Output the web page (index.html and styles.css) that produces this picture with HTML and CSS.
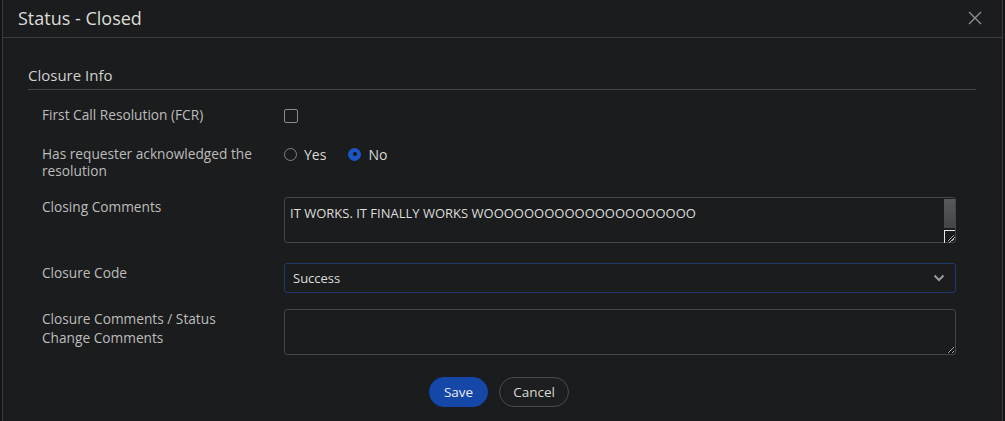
FILE: index.html
```html
<!DOCTYPE html>
<html lang="en">
<head>
<meta charset="utf-8">
<title>Status - Closed</title>
<link rel="stylesheet" href="styles.css">
</head>
<body>
<div class="dialog">
  <div class="header">
    <div class="title">Status - Closed</div>
    <svg class="close" width="14" height="14" viewBox="0 0 14 14"><path d="M1 1L13 13M13 1L1 13" stroke="#8f9092" stroke-width="1.4" fill="none"/></svg>
  </div>
  <div class="body">
    <div class="section-title">Closure Info</div>
    <div class="row r1">
      <div class="label">First Call Resolution (FCR)</div>
      <div class="control"><span class="checkbox"></span></div>
    </div>
    <div class="row r2">
      <div class="label">Has requester acknowledged the resolution</div>
      <div class="control radios">
        <span class="radio"></span><span class="rlabel">Yes</span>
        <span class="radio on"></span><span class="rlabel">No</span>
      </div>
    </div>
    <div class="row r3">
      <div class="label pad">Closing Comments</div>
      <div class="control ta-wrap"><textarea class="ta scroll">IT WORKS. IT FINALLY WORKS WOOOOOOOOOOOOOOOOOOOOO</textarea><span class="sbar"></span></div>
    </div>
    <div class="row r4">
      <div class="label sel-label">Closure Code</div>
      <div class="control"><div class="select"><span>Success</span><svg width="12" height="8" viewBox="0 0 12 8"><path d="M1.5 1.5L6 6L10.5 1.5" stroke="#9a9b9d" stroke-width="2" fill="none"/></svg></div></div>
    </div>
    <div class="row r5">
      <div class="label pad2">Closure Comments / Status Change Comments</div>
      <div class="control"><textarea class="ta"></textarea></div>
    </div>
    <div class="buttons">
      <button class="btn save">Save</button>
      <button class="btn cancel">Cancel</button>
    </div>
  </div>
</div>
</body>
</html>
```
FILE: styles.css
```css
html, body {
  margin: 0;
  padding: 0;
  background: #141414;
  width: 1005px;
  height: 421px;
  overflow: hidden;
  font-family: "Open Sans", "Noto Sans", sans-serif;
}
.dialog {
  margin-left: 2px;
  width: 999px;
  height: 421px;
  background: #1b1c1e;
  border-left: 1px solid #3a3b3d;
  border-right: 1px solid #3a3b3d;
  color-scheme: dark;
}
.header {
  height: 38px;
  border-bottom: 1px solid #3c3d3f;
  display: flex;
  align-items: center;
  justify-content: space-between;
  padding: 0 20px 0 15px;
  box-sizing: border-box;
}
.title {
  font-size: 18px;
  color: #dcdcd6;
  line-height: 24px;
  margin-top: -1px;
}
.close { margin-top: -1px; }
.body {
  padding: 27px 26px 0 25px;
}
.section-title {
  font-size: 15px;
  color: #d0d0cc;
  line-height: 20px;
  padding-bottom: 4px;
  border-bottom: 1px solid #434446;
}
.row {
  display: grid;
  grid-template-columns: 242px 672px;
  padding-left: 14px;
  align-items: start;
}
.label {
  font-size: 13.7px;
  line-height: 17px;
  color: #bdbdbb;
  max-width: 222px;
}
.r1 { margin-top: 17px; }
.r2 { margin-top: 22px; }
.r3 { margin-top: 18px; }
.r4 { margin-top: 20px; }
.r5 { margin-top: 16px; }
.pad { padding-top: 1px; }
.sel-label { padding-top: 1px; }
.pad2 { padding-top: 0; line-height: 19px; }
.checkbox {
  display: block;
  width: 12px;
  height: 12px;
  border: 1px solid #8a8b8d;
  border-radius: 2px;
  margin-top: 2px;
}
.r1 .label { margin-top: -1px; }
.radios {
  display: flex;
  align-items: center;
  height: 18px;
}
.radio {
  width: 11px;
  height: 11px;
  border: 1px solid #7f8082;
  border-radius: 50%;
  box-sizing: content-box;
  margin-right: 7px;
}
.radio.on {
  background: #1a56c4;
  border-color: #1a56c4;
  position: relative;
}
.radio.on::after {
  content: "";
  position: absolute;
  left: 3.5px;
  top: 3.5px;
  width: 4px;
  height: 4px;
  border-radius: 50%;
  background: #11131a;
}
.rlabel {
  font-size: 14px;
  color: #d8d8d4;
  margin-right: 22px;
}
.ta-wrap { position: relative; }
.ta {
  display: block;
  width: 672px;
  height: 46px;
  box-sizing: border-box;
  background: #1b1c1e;
  border: 1px solid #454648;
  border-radius: 3px;
  padding: 7px 5px;
  font-family: "Open Sans", "Noto Sans", sans-serif;
  font-size: 13px;
  line-height: 16px;
  color: #dededa;
  resize: vertical;
  outline: none;
}
.ta.scroll { overflow: hidden; }
.sbar {
  position: absolute;
  right: 1px;
  top: 2px;
  width: 11px;
  height: 29px;
  background: linear-gradient(to bottom, #58595b, #444547);
}
.sbar::after {
  content: "";
  position: absolute;
  left: 0;
  top: 31px;
  width: 10px;
  height: 12px;
  border-top: 1px solid #e6e6e6;
  border-left: 1px solid #e6e6e6;
  background: linear-gradient(135deg, transparent 70%, #bbbbbb 70%, #bbbbbb 76%, transparent 76%);
}
.select {
  width: 672px;
  height: 30px;
  box-sizing: border-box;
  border: 1px solid #1f3b6e;
  border-radius: 3px;
  display: flex;
  align-items: center;
  justify-content: space-between;
  padding: 0 10px 0 8px;
  font-size: 13px;
  color: #dededa;
}
.buttons {
  display: flex;
  justify-content: center;
  gap: 11px;
  margin-top: 22px;
  padding-right: 6px;
}
.btn {
  height: 30px;
  border-radius: 15px;
  font-family: "Open Sans", "Noto Sans", sans-serif;
  font-size: 13.5px;
  cursor: pointer;
}
.save {
  width: 59px;
  background: #1547a8;
  border: 1px solid #1547a8;
  color: #e8ecf4;
}
.cancel {
  width: 70px;
  background: #1d1e20;
  border: 1px solid #4a4b4d;
  color: #d8d8d4;
}
```
